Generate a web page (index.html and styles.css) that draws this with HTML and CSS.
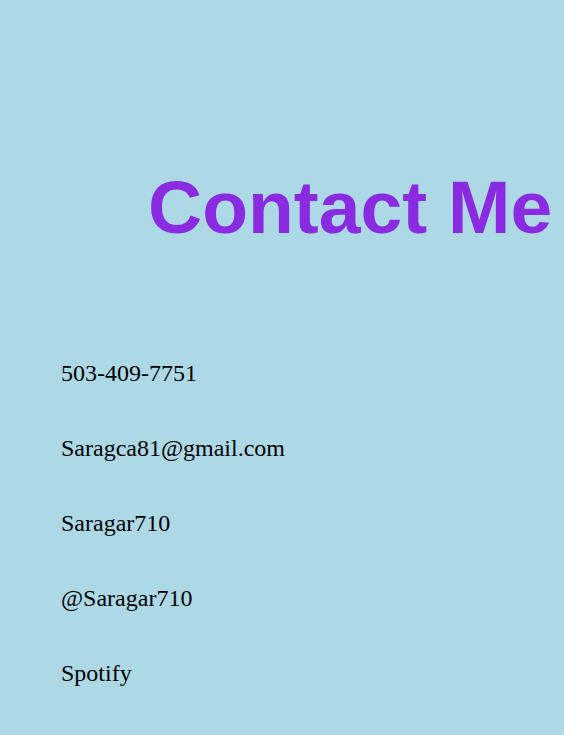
FILE: index.html
```html
<!DOCTYPE html>
<html>
<head>
<meta charset="utf-8">
<link rel="stylesheet" href="styles.css">
</head>
<body>
<h1 class="title">Contact Me</h1>
<div class="contacts">
  <p class="item">503-409-7751</p>
  <p class="item">Saragca81@gmail.com</p>
  <p class="item">Saragar710</p>
  <p class="item">@Saragar710</p>
  <p class="item">Spotify</p>
</div>
</body>
</html>
```

FILE: styles.css
```css
html, body {
  margin: 0;
  padding: 0;
}
body {
  background: #add8e6;
  width: 564px;
  height: 735px;
  overflow: hidden;
}
.title {
  margin: 0;
  padding: 164px 0 0 148px;
  font-family: "Liberation Sans", Arial, sans-serif;
  font-weight: bold;
  font-size: 75px;
  line-height: 86px;
  color: #8a2be2;
  white-space: nowrap;
}
.contacts {
  display: flex;
  flex-direction: column;
  gap: 48px;
  padding: 110px 0 0 61px;
}
.item {
  margin: 0;
  font-family: "Liberation Serif", "Times New Roman", serif;
  font-size: 24px;
  line-height: 27px;
  color: #000;
}
```
